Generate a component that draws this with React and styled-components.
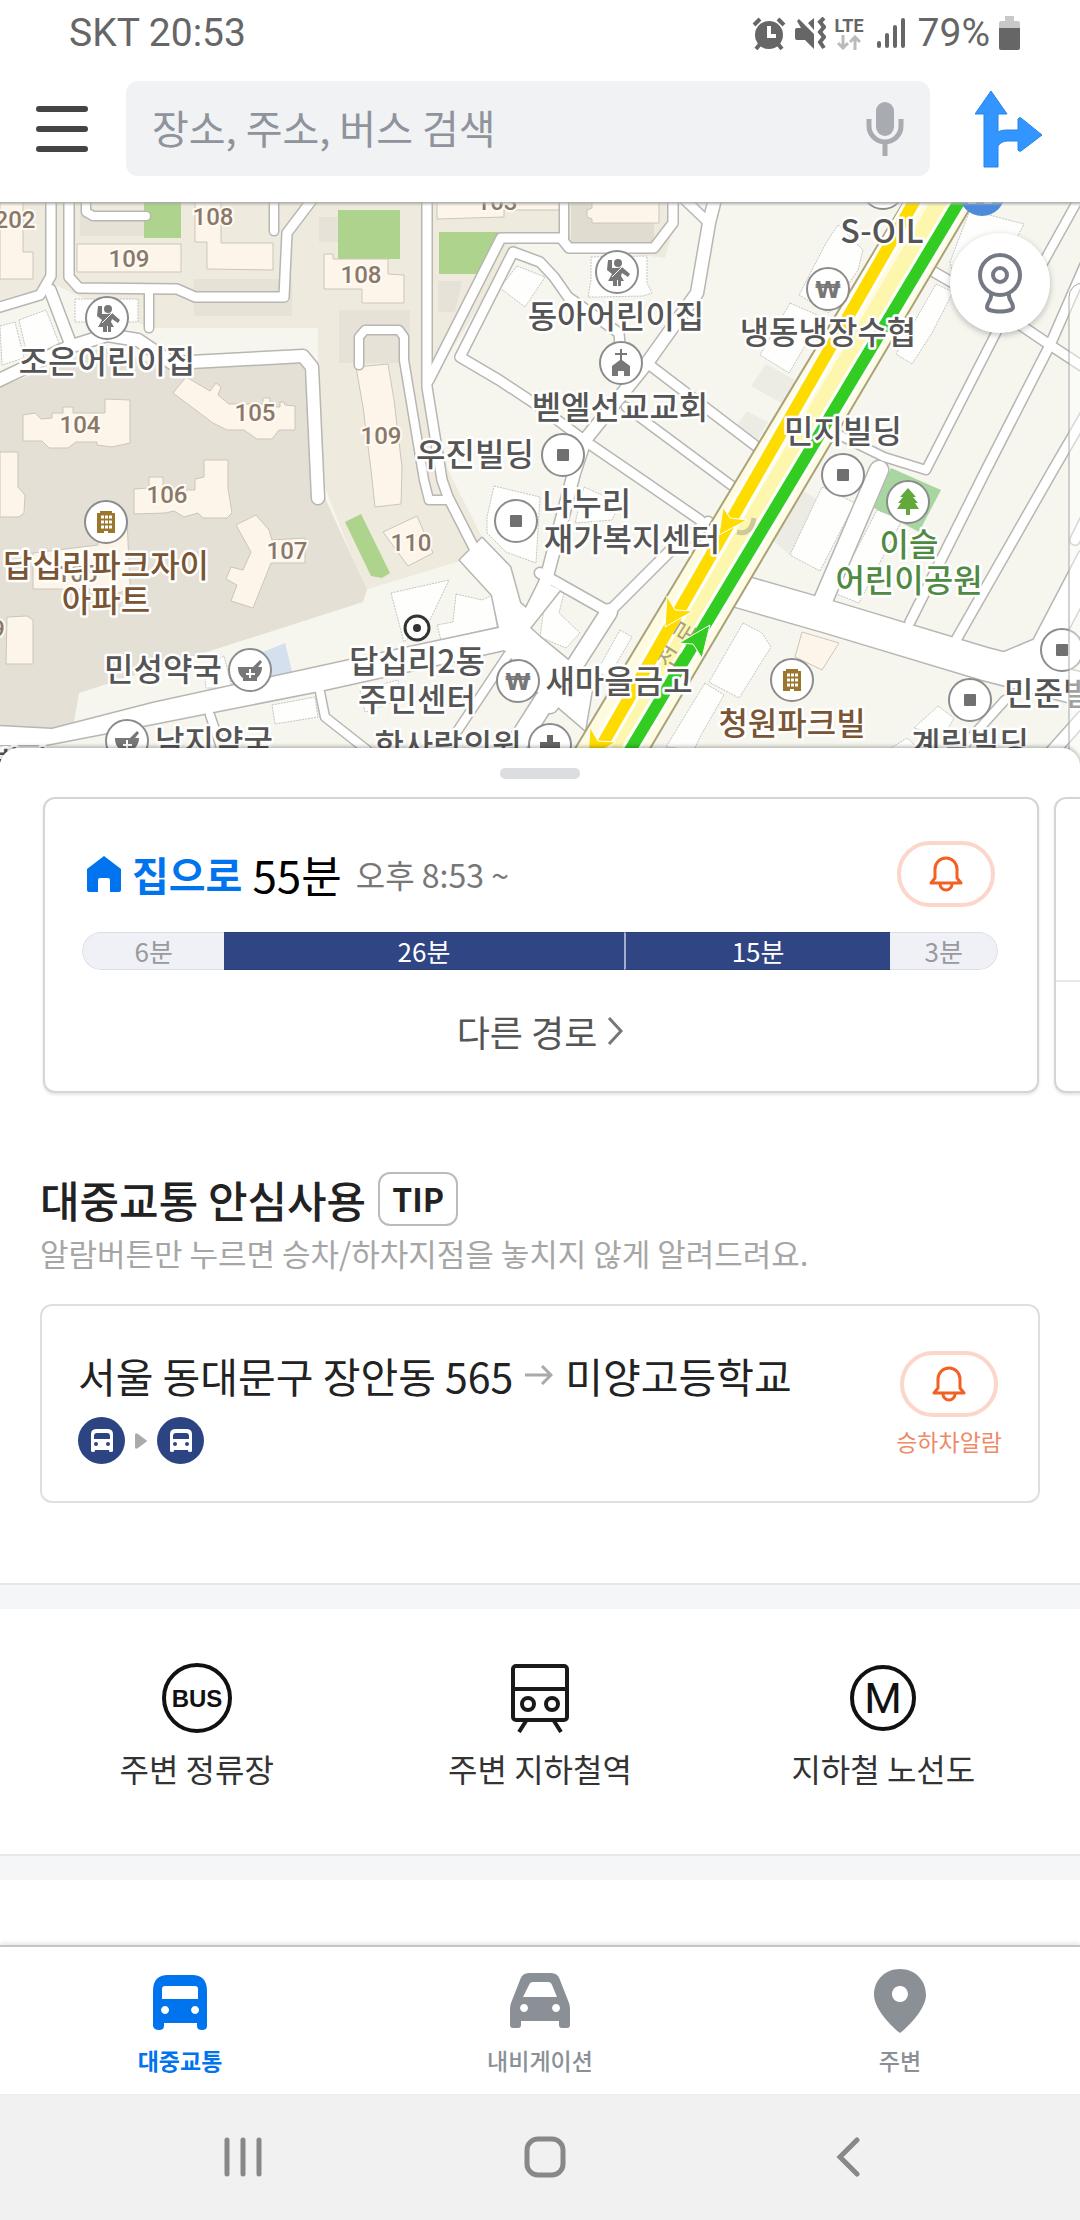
import React from 'react'
import styled, { createGlobalStyle } from 'styled-components'

const GlobalStyle = createGlobalStyle`
    * {
        box-sizing: border-box;
    }
    body {
        margin: 0;
        background: #fff;
        font-family: 'Noto Sans CJK KR', sans-serif;
        color: #222;
    }
    button {
        margin: 0;
        padding: 0;
        border: 0;
        background: none;
        font: inherit;
        cursor: pointer;
    }
    a {
        color: inherit;
        text-decoration: none;
    }
    h1, h2, p {
        margin: 0;
        font-weight: 400;
    }
    svg {
        display: block;
        flex: none;
    }
`

const Page = styled.div`
    display: flex;
    flex-direction: column;
    min-height: 100vh;
    overflow: hidden;
`

/* status bar */
const StatusBar = styled.div`
    display: flex;
    justify-content: space-between;
    align-items: center;
    height: 66px;
    padding: 0 60px 0 69px;
    font-family: Roboto, sans-serif;
    font-size: 39px;
    line-height: 46px;
    color: #666;
`
const StatusIcons = styled.div`
    display: flex;
    align-items: center;
    gap: 9px;
`
const Network = styled.div`
    display: flex;
    flex-direction: column;
    align-items: center;
    font-size: 18px;
    line-height: 18px;
    font-weight: 700;
`

/* search header */
const Header = styled.header`
    display: flex;
    align-items: center;
    padding: 15px 37px 26px 36px;
`
const SearchBox = styled.label`
    flex: 1;
    min-width: 0;
    display: flex;
    align-items: center;
    height: 95px;
    margin: 0 45px 0 38px;
    padding: 0 26px;
    border-radius: 12px;
    background: #f1f2f4;
`
const SearchInput = styled.input`
    flex: 1;
    min-width: 0;
    padding: 0 0 4px;
    border: 0;
    outline: 0;
    background: none;
    font: inherit;
    font-size: 40px;
    color: #333;
    &::placeholder {
        color: #8f949c;
        opacity: 1;
    }
`

/* map */
const MapArea = styled.div`
    position: relative;
    height: 562px;
    overflow: hidden;
    background: #f6f6ef;
    svg {
        width: 100%;
        height: 100%;
    }
    &::after {
        content: '';
        position: absolute;
        top: 0;
        left: 0;
        right: 0;
        height: 4px;
        background: linear-gradient(#aaa, rgba(170, 170, 170, 0));
    }
`
const CameraButton = styled.button`
    position: absolute;
    top: 31px;
    right: 30px;
    width: 100px;
    height: 100px;
    border-radius: 50%;
    background: #fff;
    box-shadow: 0 2px 6px rgba(0, 0, 0, 0.25);
    svg {
        width: 48px;
        height: 64px;
        margin: 0 auto;
    }
`

/* bottom sheet */
const Sheet = styled.main`
    position: relative;
    flex: 1;
    margin-top: -16px;
    padding-top: 20px;
    border-radius: 18px 18px 0 0;
    background: #fff;
    box-shadow: 0 -1px 4px rgba(0, 0, 0, 0.35);
`
const Handle = styled.div`
    width: 80px;
    height: 11px;
    margin: 0 auto 17px;
    border-radius: 5px;
    background: #dcdde0;
`
const Cards = styled.div`
    display: flex;
    gap: 15px;
    overflow: hidden;
    padding: 1px 0 8px 43px;
`
const Card = styled.section`
    flex: 0 0 calc(100% - 41px);
    display: flex;
    flex-direction: column;
    min-height: 296px;
    padding: 42px 39px 36px 37px;
    border: 2px solid #d4d5d6;
    border-radius: 12px;
    background: #fff;
    box-shadow: 0 2px 3px rgba(0, 0, 0, 0.1);
`
const NextCard = styled(Card)`
    padding: 181px 0 0;
    &::before {
        content: '';
        height: 2px;
        background: #e6e7e9;
    }
`
const CardTop = styled.div`
    display: flex;
    justify-content: space-between;
    align-items: center;
    padding: 0 3px 0 4px;
`
const Summary = styled.h1`
    display: flex;
    align-items: center;
    line-height: 60px;
`
const Destination = styled.span`
    margin: 0 10px 0 10px;
    font-size: 40px;
    font-weight: 700;
    color: #0073ee;
`
const Duration = styled.span`
    margin-right: 14px;
    font-size: 44px;
    color: #000;
`
const Departure = styled.span`
    font-size: 32px;
    color: #777;
`
const BellButton = styled.button`
    display: flex;
    justify-content: center;
    align-items: center;
    width: 98px;
    height: 66px;
    border: 4px solid #fcd6ca;
    border-radius: 33px;
    background: #fff;
`
const Bar = styled.div`
    display: flex;
    height: 38px;
    margin: 25px 0 37px;
    border-radius: 19px;
    overflow: hidden;
    font-size: 26px;
    line-height: 35px;
    text-align: center;
`
const Segment = styled.div`
    flex: ${(props) => props.$size} 1 0;
    background: ${(props) => (props.$ride ? '#2f4584' : '#f0f1f6')};
    color: ${(props) => (props.$ride ? '#fff' : '#999a9f')};
    border-style: solid;
    border-color: ${(props) => (props.$ride ? '#2a3e78' : '#dcdde2')};
    border-width: 1px 0;
    ${(props) => props.$line && 'border-left: 2px solid #a3add0;'}
    &:first-child {
        border-left-width: 1px;
        border-radius: 19px 0 0 19px;
    }
    &:last-child {
        border-right-width: 1px;
        border-radius: 0 19px 19px 0;
    }
`
const MoreLink = styled.a`
    align-self: center;
    display: flex;
    align-items: center;
    gap: 10px;
    font-size: 36px;
    line-height: 48px;
    color: #555;
`

/* tip */
const Tip = styled.section`
    padding: 71px 40px 80px;
`
const TipTitle = styled.h2`
    display: flex;
    align-items: center;
    gap: 12px;
    font-size: 43px;
    font-weight: 500;
    line-height: 54px;
`
const TipTag = styled.span`
    width: 80px;
    height: 54px;
    border: 2px solid #bbb;
    border-radius: 12px;
    font-size: 32px;
    font-weight: 700;
    line-height: 48px;
    text-align: center;
`
const TipText = styled.p`
    margin: 7px 0 31px;
    font-size: 31px;
    line-height: 40px;
    color: #a6a6a6;
`
const TipCard = styled.div`
    display: flex;
    justify-content: space-between;
    padding: 45px 36px 37px 36px;
    border: 2px solid #dedfe0;
    border-radius: 12px;
`
const Route = styled.p`
    display: flex;
    align-items: center;
    gap: 12px;
    margin-bottom: 18px;
    font-size: 41px;
    line-height: 48px;
`
const Transfers = styled.div`
    display: flex;
    align-items: center;
    gap: 10px;
`
const Alarm = styled.div`
    display: flex;
    flex-direction: column;
    align-items: center;
    gap: 9px;
    font-size: 23px;
    line-height: 30px;
    color: #ee8a68;
`

const Divider = styled.hr`
    height: 26px;
    margin: 0;
    border: 0;
    border-top: 2px solid #e6e7e9;
    background: #f5f6f8;
`
const Menu = styled.nav`
    display: grid;
    grid-template-columns: repeat(3, 1fr);
    padding: 54px 25px 66px;
`
const MenuItem = styled.a`
    display: flex;
    flex-direction: column;
    align-items: center;
    gap: 15px;
    font-size: 32px;
    line-height: 40px;
    color: #333;
`

/* tabs */
const Tabs = styled.nav`
    position: relative;
    display: grid;
    grid-template-columns: repeat(3, 1fr);
    padding: 22px 0 18px;
    border-top: 2px solid #c6c6c6;
    background: #fff;
    box-shadow: 0 -2px 4px rgba(0, 0, 0, 0.1);
`
const Tab = styled.a`
    display: flex;
    flex-direction: column;
    align-items: center;
    gap: 11px;
    font-size: 23px;
    font-weight: ${(props) => (props.$active ? 700 : 500)};
    line-height: 32px;
    color: ${(props) => (props.$active ? '#0073ee' : '#8b9097')};
`
const SystemBar = styled.div`
    display: grid;
    grid-template-columns: repeat(3, 1fr);
    height: 126px;
    padding: 0 81px 0 92px;
    background: #f1f1f1;
    button {
        display: flex;
        justify-content: center;
        align-items: center;
    }
`

/* map data */
const complexes = [
    ['#efeade', '0,202 680,202 665,258 520,240 430,385 448,470 482,537 463,560 365,590 318,470 318,328 150,328 55,285 0,300'],
    ['#e4e0d5', '0,387 103,347 165,367 303,362 322,480 326,500 367,590 363,602 79,693 74,722 52,729 0,726'],
    ['#e6e2d7', '80,216 144,216 144,236 80,236'],
    ['#e6e2d7', '194,279 292,279 292,316 194,316'],
    ['#e6e2d7', '339,310 410,310 410,363 339,363'],
    ['#e6e2d7', '319,217 338,217 338,242 319,242'],
    ['#e6e2d7', '438,281 462,281 455,312 438,312'],
    ['#e0dccf', '571,202 654,202 654,243 571,243'],
    ['#ecece4', '766,364 795,380 785,405 751,386'],
    ['#ecece4', '747,411 768,422 758,440 736,427'],
    ['#ecece4', '795,485 822,503 790,555 772,540'],
    ['#aed38c', '144,202 181,202 181,238 144,238'],
    ['#aed38c', '338,210 400,210 400,259 338,259'],
    ['#aed38c', '439,232 499,232 477,274 439,274'],
    ['#aed38c', '345,522 361,514 390,573 382,578 371,576'],
    ['#a8d6a0', '891,468 941,490 919,532 874,508'],
    ['#d4e0ee', '263,652 285,643 293,675 270,681'],
]

const blocks = [
    '77,244 181,244 181,272 77,272',
    '195,200 221,200 221,243 273,243 273,270 207,269 207,242 195,242',
    '0,200 23,200 23,252 33,252 33,279 0,279',
    '324,254 333,254 333,259 388,259 388,274 404,275 404,303 362,303 362,289 324,289',
    '437,200 437,219 504,217 504,210 560,210 560,200',
    '592,200 592,208 587,210 587,217 592,219 592,223 659,223 659,200',
    '23,415 35,413 41,419 52,418 52,413 63,413 63,407 73,407 73,413 105,413 105,399 130,400 130,443 112,447 97,445 97,442 76,442 68,448 49,448 42,441 23,441',
    '173,393 186,377 210,391 216,383 221,387 218,395 229,404 263,404 263,398 270,398 270,407 280,407 280,402 284,402 285,405 295,406 295,430 279,430 272,439 257,439 244,430 227,430 213,423',
    '356,367 388,364 394,400 402,467 401,504 375,507 371,470 363,407',
    '134,489 149,488 149,477 163,477 163,490 195,490 195,479 204,477 204,460 228,460 228,488 232,513 227,518 203,518 198,513 184,517 174,511 165,513 134,514',
    '236,525 256,515 269,530 272,540 305,538 305,563 271,563 253,608 231,601 237,585 226,579 231,567 243,570 251,552',
    '383,532 417,516 433,553 408,566',
    '0,452 18,452 18,487 25,495 24,513 19,517 0,517',
    '33,553 98,545 98,520 127,520 130,585 120,593 99,589 33,589',
    '7,617 27,616 33,620 33,664 6,664',
    '802,632 839,643 822,670 795,657',
]

const houses = [
    '75,299 138,299 138,322 75,322',
    '19,320 46,310 59,343 28,359',
    '0,326 15,322 24,358 2,365',
    '517,266 545,277 525,307 500,288',
    '591,257 647,256 647,283 652,293 643,296 598,297 588,297 591,280',
    '838,225 863,250 858,270 829,313 799,295 826,243',
    '790,303 822,317 789,373 760,355',
    '936,284 953,292 932,333 912,364 896,354',
    '970,210 1024,224 1005,260 960,300 950,262',
    '494,486 540,497 536,563 506,552 487,533 487,517',
    '391,593 449,580 430,620 404,642',
    '456,594 482,600 492,595 497,627 441,640 437,625 453,622',
    '272,705 315,697 318,717 275,724',
    '204,668 224,656 232,688 206,688',
    '360,690 398,680 400,700 365,712',
    '584,487 620,503 612,520 575,523',
    '822,487 855,503 820,571 790,555',
    '877,510 902,520 859,603 834,593',
    '743,623 762,633 771,647 739,698 709,682',
    '705,683 724,695 700,737 694,750 666,747',
    '547,587 564,593 559,613 580,633 566,648 540,637',
    '620,630 632,637 608,678 597,671',
    '938,706 954,718 944,736 914,728',
    '880,755 907,738 925,755',
]

const roads = [
    [9, '51,195 51,276 40,295 0,307'],
    [11, '50,290 71,345'],
    [9, '69,195 69,277 79,288 177,289 195,297 284,297 287,233 312,200 318,192'],
    [8, '149,290 149,328'],
    [8, '86,195 86,212 93,216 146,216'],
    [8, '274,195 274,231'],
    [12, '-5,382 69,347 107,335 138,340 172,363 303,356 312,367 318,498'],
    [8, '359,365 359,337 365,330 399,330 404,337 404,360 424,480 429,500 448,500'],
    [9, '427,195 427,387 442,480 448,497 474,548'],
    [9, '429,380 501,238 561,238 569,248 654,248 673,223 673,195'],
    [8, '564,195 564,238'],
    [9, '620,345 619,333 568,297 554,277 540,262 513,252 460,357 499,380 540,407 588,443 645,482 700,520'],
    [12, '716,195 709,223 697,293 647,363 585,440 574,473 540,603'],
    [9, '685,200 709,223'],
    [9, '647,363 765,453'],
    [8, '626,407 735,488'],
    [10, '540,573 609,612 671,550 708,522'],
    [16, '609,612 575,665 550,705'],
    [32, '735,590 829,617 985,664 1085,690'],
    [26, '1000,668 1043,650 1090,560'],
    [18, '819,610 879,470'],
    [8, '825,428 884,457 926,470 996,333 1000,320'],
    [9, '910,622 986,470 1050,345 1085,265'],
    [9, '1010,318 1050,345 1085,368'],
    [9, '956,640 1053,470 1085,415'],
    [8, '1078,200 1043,263'],
    [9, '934,272 960,287'],
    [9, '1075,540 1085,520'],
    [8, '210,715 222,750'],
    [8, '320,692 325,717 367,750'],
    [8, '508,655 458,730'],
    [20, '545,700 510,755'],
    [8, '1005,700 960,750'],
    [12, '1085,715 1052,752'],
]

const avenue =
    '-5,726 52,729 153,703 396,650 499,628 492,595 460,560 482,538 510,567 520,603 526,608 540,580 560,590 530,628 540,637 568,660 595,672 585,730 550,700 530,687 508,653 504,650 324,690 213,712 107,733 45,745 -5,745'

const blockLabels = [
    [15, 228, '202'],
    [213, 225, '108'],
    [129, 267, '109'],
    [361, 283, '108'],
    [497, 210, '103'],
    [80, 433, '104'],
    [255, 421, '105'],
    [381, 444, '109'],
    [167, 503, '106'],
    [287, 559, '107'],
    [411, 551, '110'],
    [77, 582, '105'],
    [-2, 637, '9'],
]

const brown = '#7a5533'
const green = '#4f8a43'
const labels = [
    [107, 373, '조은어린이집'],
    [616, 328, '동아어린이집'],
    [882, 243, 'S-OIL'],
    [620, 419, '벧엘선교교회'],
    [828, 344, '냉동냉장수협'],
    [843, 443, '민지빌딩'],
    [475, 466, '우진빌딩'],
    [587, 515, '나누리'],
    [632, 551, '재가복지센터'],
    [106, 577, '답십리파크자이', brown],
    [106, 612, '아파트', brown],
    [417, 673, '답십리2동'],
    [417, 711, '주민센터'],
    [163, 681, '민성약국'],
    [214, 753, '남지약국'],
    [448, 757, '한사랑의원'],
    [619, 693, '새마을금고'],
    [909, 556, '이슬', green],
    [909, 592, '어린이공원', green],
    [792, 735, '청원파크빌', brown],
    [1063, 705, '민준빌딩'],
    [970, 755, '계림빌딩'],
    [20, 774, '빌라'],
]

const pins = [
    [107, 318, 'kid'],
    [617, 272, 'kid'],
    [828, 289, 'won'],
    [621, 363, 'church'],
    [563, 455, 'square'],
    [843, 475, 'square'],
    [106, 522, 'building'],
    [516, 521, 'square'],
    [250, 670, 'pharmacy'],
    [127, 741, 'pharmacy'],
    [518, 681, 'won'],
    [550, 745, 'plus'],
    [792, 680, 'building'],
    [908, 502, 'tree'],
    [970, 700, 'square'],
    [1062, 650, 'square'],
    [883, 188, 'square'],
]

const PinGlyph = ({ kind }) => {
    switch (kind) {
        case 'kid':
            return (
                <g fill="#777">
                    <circle cx="1" cy="-9" r="4" />
                    <path d="M-9-12h4v8l5 0 5-1 8 7-2 3-6-4-1 3 3 5h-3v5H1V8h-1v6h-4V9h-5l4-7-5-4z" />
                    <path d="M5-5-5 5" stroke="#fff" />
                </g>
            )
        case 'church':
            return <path fill="#777" d="M-1-14h2v4h5v2H1v5l8 6v10H3V8h-6v5h-6V3l8-6v-5h-5v-2h5z" />
        case 'square':
            return <rect x="-6" y="-6" width="12" height="12" rx="1" fill="#707070" />
        case 'building':
            return (
                <g fill="none">
                    <path d="M-9-9h3v-2H6v2h3v20H2V9h-4v2h-7z" fill="#9c762c" />
                    <path d="M-5-5H6M-5 0H6M-5 5H6" stroke="#fff" strokeWidth="3" strokeDasharray="3 1" />
                </g>
            )
        case 'pharmacy':
            return (
                <g>
                    <path d="M-12-3H3l7-7 2 2-4 5h4C12 3 9 6 7 8v3H-7V8c-3-2-5-5-5-11z" fill="#777" />
                    <path d="M0-1v9M-4 4h9" stroke="#fff" strokeWidth="2" />
                </g>
            )
        case 'plus':
            return <path d="M-10 0h20M0-10v20" stroke="#666" strokeWidth="6" />
        case 'tree':
            return <path fill="#62a83b" d="m0-14 8 9H5l5 6H7l4 6H2v6h-4V7h-9l4-6h-3l5-6h-3z" />
        default:
            return (
                <text
                    y="9"
                    textAnchor="middle"
                    fontFamily="'DejaVu Sans', sans-serif"
                    fontSize="23"
                    fontWeight="700"
                    fill="#777"
                >
                    ₩
                </text>
            )
    }
}

const CityMap = () => (
    <svg viewBox="0 202 1080 562" preserveAspectRatio="xMidYMid slice" role="img" aria-label="지도">
        {complexes.map(([fill, points], i) => (
            <polygon key={i} points={points} fill={fill} />
        ))}
        {blocks.map((points) => (
            <polygon key={points} points={points} fill="#fdf5ea" stroke="#cbc6bb" />
        ))}
        {houses.map((points) => (
            <polygon key={points} points={points} fill="#fefefc" stroke="#c4c4c4" strokeDasharray="2 1" />
        ))}
        <g fill="none" stroke="#b7b6b2" strokeLinecap="round" strokeLinejoin="round">
            {roads.map(([width, points]) => (
                <polyline key={points} points={points} strokeWidth={width + 3} />
            ))}
            <polygon points={avenue} strokeWidth="3" />
        </g>
        <g fill="none" stroke="#fff" strokeLinecap="round" strokeLinejoin="round">
            {roads.map(([width, points]) => (
                <polyline key={points} points={points} strokeWidth={width} />
            ))}
            <polygon points={avenue} fill="#fff" stroke="none" />
        </g>

        <polygon points="908,195 978,195 648,752 573,752" fill="#fefbe0" stroke="#aaa27a" strokeWidth="2" />
        <path d="M948 195 620 752" stroke="#fdf7ae" strokeWidth="24" />
        <g fill="none">
            <path d="M918 195 598 752" stroke="#fff" strokeWidth="18" />
            <path d="M963 195 629 752" stroke="#fff" strokeWidth="18" />
            <g fontSize="24" fill="#a8a07e" textAnchor="middle">
                <text transform="translate(676 661) rotate(-58)">천</text>
                <text transform="translate(692 637) rotate(-58)">로</text>
            </g>
            <path d="M737 532q14 4 17-14" stroke="#cfc99a" strokeWidth="5" />
            <path d="M918 195 598 752" stroke="#ffdc00" strokeWidth="12" />
            <path d="M963 195 629 752" stroke="#33cc22" strokeWidth="12" />
        </g>
        <g fill="#ffdc00" stroke="#fff" strokeWidth="1">
            <path d="m719 535 4-28 7 11 17 2z" />
            <path d="m665 627 2-31 8 14 18 1z" />
            <path d="m588 758 2-31 8 14 18 1z" />
        </g>
        <path d="m710 625-31 18 14 1 9 14z" fill="#33cc22" stroke="#fff" />
        <circle cx="982" cy="193" r="23" fill="#4d8adb" />
        <path d="M968 202h8M984 202h8" stroke="#fff" strokeWidth="3" />

        <g
            fontFamily="'Liberation Sans Narrow', Roboto, sans-serif"
            fontSize="24"
            fontWeight="500"
            fill="#8a786a"
            stroke="#fffaf2"
            strokeWidth="4"
            paintOrder="stroke"
            textAnchor="middle"
        >
            {blockLabels.map(([x, y, text]) => (
                <text key={`${x}-${y}`} x={x} y={y}>
                    {text}
                </text>
            ))}
        </g>
        {pins.map(([x, y, kind]) => (
            <g key={`${x}-${y}`} transform={`translate(${x} ${y})`}>
                <circle r="21" fill="#fff" stroke="#8c8c8c" strokeWidth="2" />
                <PinGlyph kind={kind} />
            </g>
        ))}
        <circle cx="417" cy="628" r="12" fill="#fff" stroke="#333" strokeWidth="3" />
        <circle cx="417" cy="628" r="4" fill="#333" />
        <g
            fontSize="32"
            fontWeight="500"
            stroke="#fff"
            strokeWidth="5"
            strokeLinejoin="round"
            paintOrder="stroke"
            textAnchor="middle"
        >
            {labels.map(([x, y, text, fill = '#555']) => (
                <text key={text} x={x} y={y} fill={fill}>
                    {text}
                </text>
            ))}
        </g>
        <rect x="1069" y="283" width="40" height="500" rx="14" fill="#fff" fillOpacity=".45" stroke="#a5a5a5" />
    </svg>
)

const BellIcon = () => (
    <svg width="34" height="38" viewBox="0 0 34 38" fill="none" stroke="#f26022" strokeWidth="3">
        <path d="M6 14a11 11 0 0 1 22 0v9l4 5H2l4-5z" strokeLinejoin="round" />
        <path d="M11 29a6 6 0 0 0 12 0" />
    </svg>
)

const BusBadge = () => (
    <svg width="47" height="47" viewBox="0 0 47 47" role="img" aria-label="버스">
        <circle cx="23.5" cy="23.5" r="23.5" fill="#2d4482" />
        <path fill="#fff" d="M13 17q0-5 6-5h10q6 0 6 5v17q0 1-2 1t-2-1v-1H17v1q0 1-2 1t-2-1z" />
        <path fill="#2d4482" d="M16 19q0-3 3-3h10q3 0 3 3v3H16z" />
        <circle cx="18" cy="27" r="2" fill="#2d4482" />
        <circle cx="30" cy="27" r="2" fill="#2d4482" />
    </svg>
)

const segments = [
    { time: '6분', size: 142 },
    { time: '26분', size: 401, ride: true },
    { time: '15분', size: 266, ride: true, line: true },
    { time: '3분', size: 107 },
]

const App = () => {
    return (
        <Page>
            <GlobalStyle />
            <StatusBar>
                <span>SKT 20:53</span>
                <StatusIcons>
                    <svg width="34" height="33" viewBox="0 0 34 33" fill="none" stroke="#666">
                        <circle cx="17" cy="18" r="14" fill="#666" stroke="none" />
                        <path d="M17 9v10h7" stroke="#fff" strokeWidth="4" />
                        <path d="m2 8 6-6M32 8l-6-6M4 32l4-5M30 32l-4-5" strokeWidth="4" />
                    </svg>
                    <svg width="31" height="33" viewBox="0 0 31 33" fill="#666">
                        <path d="M0 13q0-2 2-2h4L2 4l2-2 15 15v15l-9-9H2q-2 0-2-2zM13 6l6-5v12z" />
                        <path d="m29 1-4 4 4 5-4 5 4 5-4 5 4 6" fill="none" stroke="#666" strokeWidth="4" />
                    </svg>
                    <Network>
                        LTE
                        <svg width="24" height="15" viewBox="0 0 24 15" fill="none" stroke="#bbb" strokeWidth="3">
                            <path d="M6 0v12M1 8l5 5 5-5M18 15V3M13 7l5-5 5 5" />
                        </svg>
                    </Network>
                    <svg width="36" height="32" viewBox="0 0 36 32" stroke="#666" strokeWidth="4" strokeLinecap="round">
                        <path d="M6 26v3M14 18v11M22 10v19M30 3v26" />
                    </svg>
                    <span>79%</span>
                    <svg width="21" height="34" viewBox="0 0 21 34">
                        <path d="M6 0h9v5h4q2 0 2 2v6H0V7q0-2 2-2h4z" fill="#c8c8c8" />
                        <path d="M0 12h21v20q0 2-2 2H2q-2 0-2-2z" fill="#666" />
                    </svg>
                </StatusIcons>
            </StatusBar>

            <Header>
                <button aria-label="메뉴">
                    <svg width="52" height="48" viewBox="0 0 52 48" stroke="#444" strokeWidth="6" strokeLinecap="round">
                        <path d="M3 4h46M3 24h46M3 44h46" />
                    </svg>
                </button>
                <SearchBox>
                    <SearchInput type="search" aria-label="검색" placeholder="장소, 주소, 버스 검색" />
                    <svg width="38" height="54" viewBox="0 0 38 54" fill="none" stroke="#a9abb2">
                        <rect x="10" width="18" height="34" rx="9" fill="#a9abb2" stroke="none" />
                        <path d="M3 17v7a16 16 0 0 0 32 0v-7M19 41v13" strokeWidth="5" />
                    </svg>
                </SearchBox>
                <button aria-label="길찾기">
                    <svg width="68" height="78" viewBox="0 0 68 78">
                        <path
                            d="M16 1 32 24h-9v18q3-2 8-2h12V29q1-2 3-1l21 17-21 16q-2 1-3-1V51H33q-7 0-10 5v21H9V24H0z"
                            fill="#3395ff"
                            stroke="#2585e8"
                        />
                    </svg>
                </button>
            </Header>

            <MapArea>
                <CityMap />
                <CameraButton aria-label="CCTV">
                    <svg viewBox="0 0 48 64" fill="none" stroke="#757984" strokeWidth="4">
                        <circle cx="24" cy="24" r="20" />
                        <circle cx="24" cy="24" r="7" />
                        <path d="M15 43c1 6-4 8-4 13 0 6 26 6 26 0 0-5-5-7-4-13" />
                    </svg>
                </CameraButton>
            </MapArea>

            <Sheet>
                <Handle />
                <Cards>
                    <Card>
                        <CardTop>
                            <Summary>
                                <svg width="36" height="38" viewBox="0 0 36 38">
                                    <path
                                        d="M18 1 35 14v21q0 2-2 2h-9V25q0-2-2-2h-8q-2 0-2 2v12H3q-2 0-2-2V14z"
                                        fill="#0073ee"
                                    />
                                </svg>
                                <Destination>집으로</Destination>
                                <Duration>55분</Duration>
                                <Departure>오후 8:53 ~</Departure>
                            </Summary>
                            <BellButton aria-label="알람">
                                <BellIcon />
                            </BellButton>
                        </CardTop>
                        <Bar>
                            {segments.map((item) => (
                                <Segment key={item.time} $size={item.size} $ride={item.ride} $line={item.line}>
                                    {item.time}
                                </Segment>
                            ))}
                        </Bar>
                        <MoreLink href="#routes">
                            다른 경로
                            <svg width="16" height="28" viewBox="0 0 16 28" fill="none" stroke="#777" strokeWidth="3">
                                <path d="m2 1 12 13L2 27" />
                            </svg>
                        </MoreLink>
                    </Card>
                    <NextCard />
                </Cards>

                <Tip>
                    <TipTitle>
                        대중교통 안심사용
                        <TipTag>TIP</TipTag>
                    </TipTitle>
                    <TipText>알람버튼만 누르면 승차/하차지점을 놓치지 않게 알려드려요.</TipText>
                    <TipCard>
                        <div>
                            <Route>
                                서울 동대문구 장안동 565
                                <svg width="28" height="20" viewBox="0 0 28 20" fill="none" stroke="#aaa" strokeWidth="3">
                                    <path d="M0 10h26M17 1l9 9-9 9" />
                                </svg>
                                미양고등학교
                            </Route>
                            <Transfers>
                                <BusBadge />
                                <svg width="12" height="16" viewBox="0 0 12 16" fill="#aaa">
                                    <path d="M0 2q0-3 3-1l8 6q2 1 0 2l-8 6q-3 2-3-1z" />
                                </svg>
                                <BusBadge />
                            </Transfers>
                        </div>
                        <Alarm>
                            <BellButton aria-label="승하차알람">
                                <BellIcon />
                            </BellButton>
                            승하차알람
                        </Alarm>
                    </TipCard>
                </Tip>

                <Divider />
                <Menu>
                    <MenuItem href="#stops">
                        <svg width="70" height="70" viewBox="0 0 70 70">
                            <circle cx="35" cy="35" r="33" fill="none" stroke="#111" strokeWidth="4" />
                            <text
                                x="35"
                                y="44"
                                textAnchor="middle"
                                fontFamily="'Liberation Sans', sans-serif"
                                fontSize="24"
                                fontWeight="700"
                                fill="#111"
                            >
                                BUS
                            </text>
                        </svg>
                        주변 정류장
                    </MenuItem>
                    <MenuItem href="#stations">
                        <svg width="58" height="70" viewBox="0 0 58 70" fill="none" stroke="#1a1a1a" strokeWidth="4">
                            <rect x="2" y="3" width="54" height="54" rx="3" />
                            <path d="M2 26h54M15 58 8 69M43 58l7 11" />
                            <circle cx="17" cy="41" r="6" />
                            <circle cx="41" cy="41" r="6" />
                        </svg>
                        주변 지하철역
                    </MenuItem>
                    <MenuItem href="#lines">
                        <svg width="66" height="70" viewBox="0 0 66 70">
                            <circle cx="33" cy="35" r="31" fill="none" stroke="#111" strokeWidth="4" />
                            <text
                                x="33"
                                y="50"
                                textAnchor="middle"
                                fontFamily="Roboto, sans-serif"
                                fontSize="43"
                                fill="#111"
                            >
                                M
                            </text>
                        </svg>
                        지하철 노선도
                    </MenuItem>
                </Menu>
                <Divider />
            </Sheet>

            <Tabs>
                <Tab href="#transit" $active>
                    <svg width="54" height="64" viewBox="0 0 54 64" fill="currentColor">
                        <path
                            fillRule="evenodd"
                            d="M0 22Q0 6 15 6h24q15 0 15 16v35q0 4-5 4t-5-4v-3H11v3q0 4-5 4t-6-4zM9 20v10h36V20q0-3-3-3H12q-3 0-3 3zM12 37a4 4 0 1 0 .1 0zM42 37a4 4 0 1 0 .1 0z"
                        />
                    </svg>
                    대중교통
                </Tab>
                <Tab href="#navigation">
                    <svg width="60" height="64" viewBox="0 0 60 64" fill="currentColor">
                        <path
                            fillRule="evenodd"
                            d="M10 11q2-7 9-7h22q7 0 9 7l9 23q1 3 1 6v16q0 3-3 3h-5q-3 0-3-3v-4H11v4q0 3-3 3H3q-3 0-3-3V40q0-3 1-6zM19 16 13 28h34l-5-12q-1-3-4-3H23q-3 0-4 3zM14 35a4 4 0 1 0 .1 0zM46 35a4 4 0 1 0 .1 0z"
                        />
                    </svg>
                    내비게이션
                </Tab>
                <Tab href="#nearby">
                    <svg width="52" height="64" viewBox="0 0 52 64" fill="currentColor">
                        <path
                            fillRule="evenodd"
                            d="M26 0C11 0 0 11 0 26c0 11 12 27 26 38 14-11 26-27 26-38C52 11 41 0 26 0zm0 17a8 8 0 1 1-.1 0z"
                        />
                    </svg>
                    주변
                </Tab>
            </Tabs>

            <SystemBar>
                <button aria-label="최근 앱">
                    <svg width="38" height="40" viewBox="0 0 38 40" stroke="#888" strokeWidth="5" strokeLinecap="round">
                        <path d="M3 3v34M19 3v34M35 3v34" />
                    </svg>
                </button>
                <button aria-label="홈">
                    <svg width="42" height="42" viewBox="0 0 42 42" fill="none" stroke="#888" strokeWidth="5">
                        <rect x="3" y="3" width="36" height="36" rx="11" />
                    </svg>
                </button>
                <button aria-label="뒤로">
                    <svg width="24" height="40" viewBox="0 0 24 40" fill="none" stroke="#888" strokeWidth="5">
                        <path d="M21 3 4 20l17 17" strokeLinecap="round" />
                    </svg>
                </button>
            </SystemBar>
        </Page>
    )
}

export default App
